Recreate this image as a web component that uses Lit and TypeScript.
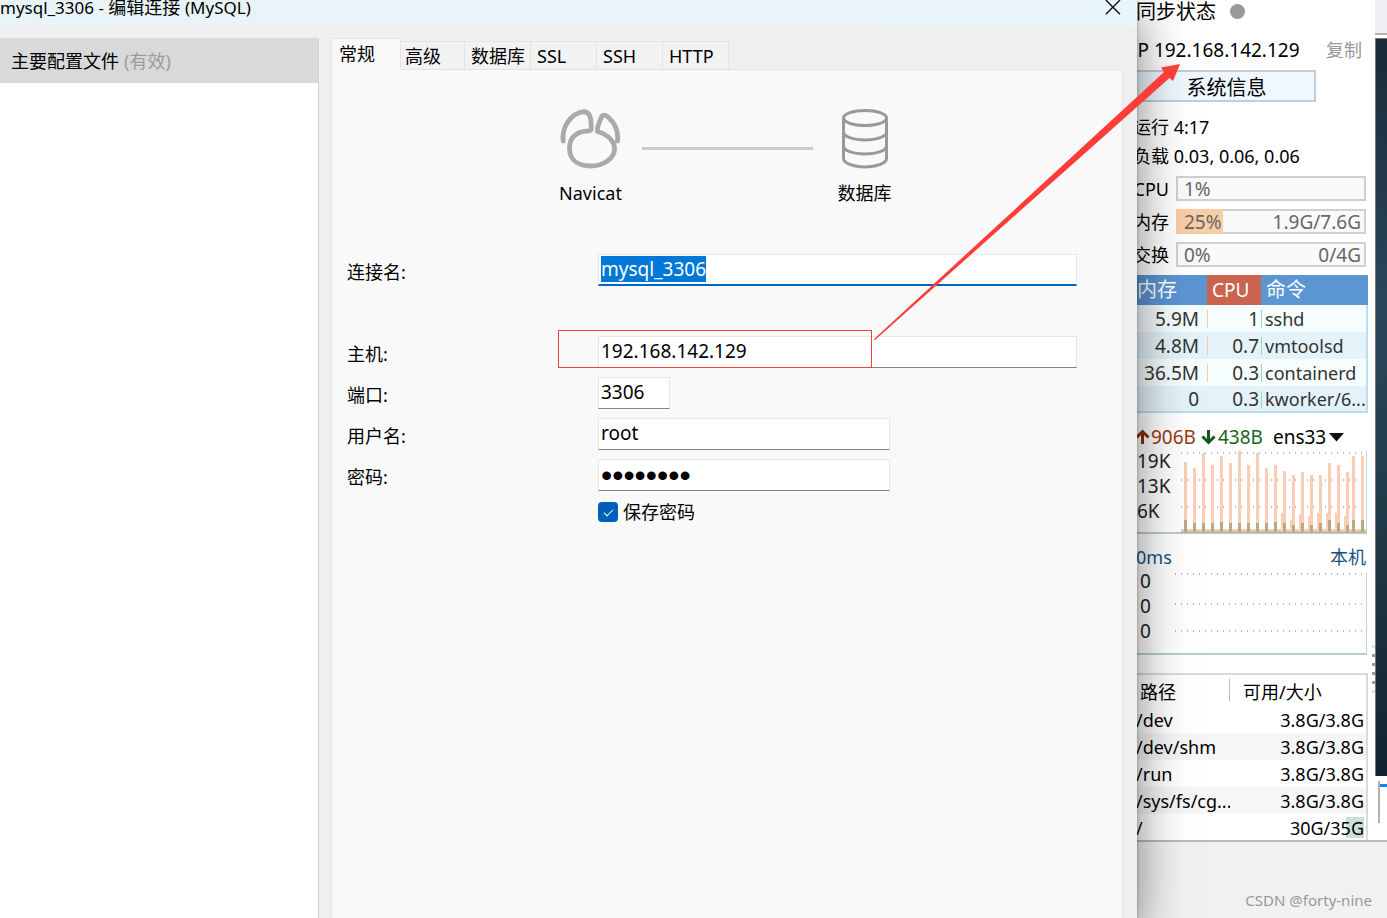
import { LitElement, html, css, svg } from "lit";
import { customElement } from "lit/decorators.js";

const base = css`
  *, *::before, *::after { box-sizing: border-box; }
  button, input, select {
    font: inherit; color: inherit; margin: 0; padding: 0; border: 0;
    border-radius: 0; background: none; appearance: none; outline: none;
  }
  svg { display: block; flex: none; }
`;

@customElement("connection-dialog")
class ConnectionDialog extends LitElement {
  static styles = [base, css`
    :host { display: flex; flex-direction: column; background: #efefef; font-size: 18px; }
    .title {
      display: flex; justify-content: space-between; align-items: flex-start;
      height: 26px; background: linear-gradient(90deg, #e9f4f7, #eaf3f8 60%, #e8f5fb);
      line-height: 14px; padding-right: 16px;
    }
    .title h1 { margin: 0; font-size: 18px; font-weight: 400; }
    .en { font-size: 17px; }
    .body { flex: 1; display: flex; padding: 12px 14px 0 0; }
    .side { width: 319px; background: #fff; border-right: 1px solid #d4d4d4; margin-right: 12px; }
    .profile { display: flex; width: 100%; height: 45px; align-items: center; gap: 5px;
      padding: 0 0 2px 11px; background: #d9d9d9; text-align: left; }
    .muted { color: #9c9c9c; }
    .main { flex: 1; display: flex; flex-direction: column; min-width: 0; }
    .tabs { display: flex; align-items: flex-end; height: 31px; }
    .tab {
      width: 66px; height: 28px; padding-left: 6px; text-align: left; white-space: nowrap;
      background: #f2f2f2; border: 1px solid #e3e3e3; border-width: 1px 1px 0 0; line-height: 26px;
    }
    .tab.on { width: 70px; height: 31px; padding-left: 7px; background: #f9f9f9; border-left-width: 1px;
      line-height: 29px; }
    .second { width: 64px; padding-left: 4px; }
    .pane {
      flex: 1; background: #f9f9f9; border-left: 1px solid #e3e3e3; border-right: 1px solid #e3e3e3;
      padding: 40px 45px 0 15px; position: relative;
    }
    .pane::before { content: ""; position: absolute; top: 0; left: 69px; right: 0; height: 1px; background: #e3e3e3; }
    .route { display: grid; grid-template-columns: 103px 171px 103px; justify-content: center;
      margin-right: -31px; }
    .end { display: flex; flex-direction: column; align-items: center; gap: 12px; line-height: 24px; margin: 0; }
    .wire { height: 3px; background: #ccc; margin-top: 38px; }
    form { margin-top: 49px; display: flex; flex-direction: column; gap: 9px; }
    .row { display: grid; grid-template-columns: 251px minmax(0, 1fr); position: relative; height: 32px; }
    .row.first { margin-bottom: 41px; }
    .row > label { line-height: 24px; padding-top: 6px; }
    .box {
      height: 32px; width: 100%; font-size: 19px; line-height: 24px; padding: 0 2px 3px;
      background: #fff; border: 1px solid #e6e6e6; border-bottom-color: #858585;
    }
    .box.focus { border-bottom: 2px solid #0067c0; padding-bottom: 2px; }
    .box.port { width: 72px; }
    .box.mid { width: 292px; }
    .box.secret { font-family: "Liberation Sans", sans-serif; font-size: 32px; padding: 0 2px 0 2px; }
    .box::selection { background: #0078d7; color: #fff; }
    .mark { position: absolute; left: 211px; top: -6px; width: 314px; height: 38px; border: 1px solid #f4403c; }
    .save { display: flex; align-items: center; gap: 5px; height: 24px; line-height: 22px; margin-left: 251px; }
    .save input { width: 20px; height: 20px; border-radius: 4px;
      background: #005fb8; display: grid; place-items: center; }
    .save input:checked::before { content: ""; width: 9px; height: 5px; border: solid #fff;
      border-width: 0 0 1px 1px; transform: translateY(-1px) rotate(-45deg); }
  `];

  firstUpdated() {
    const name = this.renderRoot.querySelector<HTMLInputElement>("#name");
    name?.focus();
    name?.select();
  }

  render() {
    return html`
      <header class="title">
        <h1><span class="en">mysql_3306 - </span>编辑连接 <span class="en">(MySQL)</span></h1>
        <button aria-label="关闭">
          <svg width="16" height="15" viewBox="0 0 16 15" stroke="#111" stroke-width="1.4">
            <path d="M.8 0 15 14.2M15 0 .8 14.2" />
          </svg>
        </button>
      </header>
      <div class="body">
        <nav class="side">
          <button class="profile">主要配置文件 <span class="muted">(有效)</span></button>
        </nav>
        <section class="main">
          <div class="tabs" role="tablist">
            <button class="tab on" role="tab" aria-selected="true">常规</button>
            <button class="tab second" role="tab">高级</button>
            ${["数据库", "SSL", "SSH", "HTTP"].map((t) => html`<button class="tab" role="tab">${t}</button>`)}
          </div>
          <div class="pane">
            <div class="route">
              <div class="end">
                <svg width="62" height="60" viewBox="0 0 62 60" fill="none" stroke="#aaa" stroke-width="4.8"
                  stroke-linecap="round" stroke-linejoin="round">
                  <path d="M3.2 32C1.5 17 12 4 23 2.8C29 2.3 31.5 7 31.200 20C31 22 29 22 27 22.1C16 22.5 9.5 29 9.5 39C9.5 51 18 57 30.500 57C44 57 54.500 49 54.500 40C54.500 33 49 26 37.5 22.500C36.700 20 38 16 41.500 8C42.500 5.500 45.500 5.500 48 8C55 14 58.500 23 57.500 32" />
                </svg>
                Navicat
              </div>
              <div class="wire"></div>
              <div class="end">
                <svg width="46" height="60" viewBox="0 0 46 60" fill="none" stroke="#999" stroke-width="3">
                  <ellipse cx="23" cy="9" rx="21.500" ry="7.500" />
                  <path d="M1.500 9V49.500C1.500 54 11 58 23 58S44.500 54 44.500 49.500V9M1.500 23C1.500 27.500 11 31 23 31S44.500 27.500 44.500 23M1.500 37C1.500 41.500 11 45 23 45S44.500 41.500 44.500 37" />
                </svg>
                数据库
              </div>
            </div>
            <form>
              <div class="row first"><label for="name">连接名:</label><input id="name" class="box focus" value="mysql_3306" /></div>
              <div class="row">
                <label for="host">主机:</label><input id="host" class="box" value="192.168.142.129" />
                <span class="mark"></span>
              </div>
              <div class="row"><label for="port">端口:</label><input id="port" class="box port" value="3306" /></div>
              <div class="row"><label for="user">用户名:</label><input id="user" class="box mid" value="root" /></div>
              <div class="row"><label for="pass">密码:</label><input id="pass" type="password" class="box mid secret" value="password" /></div>
              <label class="save"><input type="checkbox" checked />保存密码</label>
            </form>
          </div>
        </section>
      </div>
    `;
  }
}

/* Upload samples: bar centre, bar top and the top of the download part. */
const SAMPLES = [
  [4, 13, 71], [13, 19, 74], [22, 4, 74], [31, 16, 74], [40, 7, 73], [49, 14, 74], [58, 2, 74],
  [67, 16, 74], [76, 4, 74], [85, 19, 74], [94, 16, 73], [103, 22, 74], [112, 26, 76], [121, 23, 74],
  [130, 26, 76], [139, 26, 74], [148, 14, 71], [157, 16, 74], [166, 23, 76], [172, 7, 71], [181, 7, 71],
];
const MINOR = [[100, 64], [109, 71], [118, 65], [127, 67], [136, 64], [145, 64], [154, 64], [163, 67]];

const grid = (x: number, ys: number[], w: number) => ys.map((y) => svg`
  <path d="M${x} ${y}H${w}" stroke="#b8b8b8" stroke-width="2" stroke-dasharray="1 5" />`);

@customElement("server-monitor")
class ServerMonitor extends LitElement {
  static styles = [base, css`
    :host { display: flex; background: #fff; font-size: 18px; height: 842px; border-bottom: 2px solid #b9b9b9; overflow: hidden; }
    .panel { flex: 1; min-width: 0; display: flex; flex-direction: column; line-height: 24px; white-space: nowrap; }
    .sync { display: flex; align-items: center; gap: 14px; font-size: 20px; height: 23px; padding-left: 11px; }
    .dot { width: 15px; height: 15px; border-radius: 50%; background: #999; }
    .ip { display: flex; justify-content: space-between; margin-top: 15px; padding: 0 6px; height: 24px; }
    .ip span { font-size: 19px; }
    .copy { color: #999; }
    .info { width: 191px; height: 32px; margin-top: 8px; border: 2px solid #c5ccd2; background: #eff8ff;
      font-size: 20px; line-height: 28px; padding: 2px 0 0 12px; }
    .stat { margin: 13px 0 0 8px; }
    .stat + .stat { margin-top: 5px; }
    .meters { display: flex; flex-direction: column; gap: 8px; margin-top: 8px; padding-right: 2px; }
    .meter { display: grid; grid-template-columns: 51px 1fr; height: 25px; align-items: center; }
    .meter > span { text-align: right; padding-right: 7px; }
    .track { position: relative; display: flex; justify-content: space-between; height: 25px; padding: 0 3px 0 6px;
      border: 2px solid #d0d0d0; background: #fafafa; color: #666; line-height: 22px; font-size: 19px; }
    .fill { position: absolute; left: -2px; top: -2px; bottom: -2px; background: #fbcda6; }
    .track b { font-weight: 400; position: relative; }
    .pct { width: 25%; }
    table { border-collapse: separate; border-spacing: 0; table-layout: fixed; width: 100%; }
    th { font-weight: 400; text-align: left; }
    th, td { padding: 0; overflow: hidden; }
    .procs { margin-top: 8px; color: #333; }
    .procs th { height: 30px; background: #5b95d2; color: #fff; font-size: 20px; padding-left: 5px; }
    .procs th.mem { padding-left: 12px; width: 82px; }
    .procs th.cpu { background: #cb644f; width: 54px; font-size: 19px; }
    .procs td { height: 27px; background-color: #f5fdff; background-size: 1px 18px;
      background-repeat: no-repeat; background-position: 0 5px; }
    .procs tr:nth-child(even) td { background-color: #e4f3f9; }
    .procs td:nth-child(1) { text-align: right; padding-right: 8px; font-size: 19px; }
    .procs td:nth-child(2) { text-align: right; padding-right: 2px; font-size: 19px;
      background-image: linear-gradient(#fbc9a0, #fbc9a0); }
    .procs tr:last-child td:nth-child(2) { background-image: none; }
    .procs td:nth-child(3) { padding-left: 4px; border-right: 2px solid #bcdcf0;
      background-image: linear-gradient(#9fd8a8, #9fd8a8); }
    .procs tr:last-child td { border-bottom: 2px solid #bcdcf0; }
    .net { display: flex; align-items: center; height: 24px; margin-top: 12px; padding-left: 10px; font-size: 19px; }
    .up { color: #9a3a12; margin: 0 5px 0 1px; }
    .down { color: #1c6420; margin: 0 10px 0 2px; }
    .net select { width: 56px; height: 24px; }
    .chart { display: flex; justify-content: space-between; height: 85px; border-bottom: 2px solid #b5cdd6; margin-right: 1px; }
    .axis { display: flex; flex-direction: column; gap: 1px; padding-left: 12px; font-size: 19px; color: #222; }
    .lat .axis { padding-left: 15px; }
    .lat { height: 86px; }
    .ping { display: flex; justify-content: space-between; height: 24px; margin-top: 11px; padding: 0 2px 0 11px; color: #17527f; }
    .disks { margin-top: 18px; border: 2px solid #dadada; border-bottom: 0; width: 243px; }
    .disks th { height: 31px; padding: 2px 0 0 13px; }
    .disks th:first-child { width: 103px; background: linear-gradient(#bbb, #bbb) right 4px / 1px 22px no-repeat; }
    .disks td { height: 27px; }
    .disks td:first-child { padding-left: 9px; }
    .disks td:last-child { text-align: right; padding-right: 2px; }
    .disks tr:nth-child(even) td { background: #f6f6f6; }
    .disks tbody tr:last-child td:last-child { background: linear-gradient(#c8e0d8, #c8e0d8) right 2px center / 18px 21px no-repeat; }
    .gutter { width: 7px; display: flex; flex-direction: column; align-items: center; gap: 6px; padding: 645px 0 0 3px; }
    .gutter i { width: 3px; height: 3px; background: #999; }
    .gutter i:first-child, .gutter i:last-child { background: #e2e2e2; }
    .edge { width: 12px; display: flex; flex-direction: column; }
    .bar { height: 35px; background: #f0f0f4; border-bottom: 2px solid #b5b5b5; }
    .term { height: 738px; margin-top: 3px; border-left: 1px solid #777; border-top: 1px solid #777;
      background: linear-gradient(#192a38, #29465a 35%, #24404f 55%, #132230); }
    .foot { height: 42px; margin-top: 5px; border: solid #b0b0b0; border-width: 0 0 0 2px; margin-left: 3px; padding-top: 3px; }
    .foot i { display: block; height: 3px; background: #0a84ff; }
  `];

  render() {
    return html`
      <div class="panel">
        <div class="sync">同步状态 <i class="dot"></i></div>
        <div class="ip"><span>IP 192.168.142.129</span><button class="copy">复制</button></div>
        <button class="info">系统信息</button>
        <div class="stat">运行 4:17</div>
        <div class="stat">负载 0.03, 0.06, 0.06</div>
        <div class="meters">
          <div class="meter"><span>CPU</span><div class="track"><b>1%</b></div></div>
          <div class="meter"><span>内存</span><div class="track"><i class="fill pct"></i><b>25%</b><b>1.9G/7.6G</b></div></div>
          <div class="meter"><span>交换</span><div class="track"><b>0%</b><b>0/4G</b></div></div>
        </div>
        <table class="procs">
          <thead><tr><th class="mem">内存</th><th class="cpu">CPU</th><th>命令</th></tr></thead>
          <tbody>
            ${[["5.9M", "1", "sshd"], ["4.8M", "0.7", "vmtoolsd"], ["36.5M", "0.3", "containerd"], ["0", "0.3", "kworker/6..."]]
              .map((r) => html`<tr>${r.map((c) => html`<td>${c}</td>`)}</tr>`)}
          </tbody>
        </table>
        <div class="net">
          <svg width="15" height="16" viewBox="0 0 15 16" fill="none" stroke="#8a2f0c" stroke-width="3"><path d="M7.500 15V3M1.500 8.500 7.500 2.500 13.500 8.500" /></svg>
          <span class="up">906B</span>
          <svg width="15" height="16" viewBox="0 0 15 16" fill="none" stroke="#145a18" stroke-width="3"><path d="M7.500 1V13M1.500 7.500 7.500 13.500 13.500 7.500" /></svg>
          <span class="down">438B</span>
          <select aria-label="网卡"><option>ens33</option></select>
          <svg width="15" height="9" viewBox="0 0 15 9"><path d="M0 0H15L7.500 8.500Z" fill="#111" /></svg>
        </div>
        <div class="chart">
          <div class="axis"><span>19K</span><span>13K</span><span>6K</span></div>
          <svg width="186" height="84" viewBox="0 0 186 84">
            ${grid(0, [4, 31, 58], 186)}
            <path d="M0 81.500H185" stroke="#fcccb4" stroke-width="3" />
            ${MINOR.map(([x, y]) => svg`<rect x=${x} y=${y} width="3" height=${83 - y} fill="#fcccb4" />`)}
            ${SAMPLES.map(([x, y, d]) => svg`
              <rect x=${x - 1} y=${y} width="3" height=${83 - y} fill="#fcccb4" />
              <rect x=${x - 1} y=${d} width="3" height=${83 - d} fill="#b8aa80" />`)}
            <path d="M0 83H185" stroke="#b8aa80" />
            <path d="M185.500 2V84" stroke="#b9d8de" />
          </svg>
        </div>
        <div class="ping"><span>0ms</span><span>本机</span></div>
        <div class="chart lat">
          <div class="axis"><span>0</span><span>0</span><span>0</span></div>
          <svg width="192" height="84" viewBox="0 0 192 84">
            ${grid(0, [5, 35, 62], 192)}
            <path d="M191.500 4V84" stroke="#b9d8de" />
          </svg>
        </div>
        <table class="disks">
          <thead><tr><th>路径</th><th>可用/大小</th></tr></thead>
          <tbody>
            ${[["/dev", "3.8G/3.8G"], ["/dev/shm", "3.8G/3.8G"], ["/run", "3.8G/3.8G"], ["/sys/fs/cg...", "3.8G/3.8G"], ["/", "30G/35G"]]
              .map(([p, s]) => html`<tr><td>${p}</td><td>${s}</td></tr>`)}
          </tbody>
        </table>
      </div>
      <div class="gutter"><i></i><i></i><i></i><i></i><i></i><i></i></div>
      <div class="edge">
        <div class="bar"></div>
        <div class="term"></div>
        <div class="foot"><i></i></div>
      </div>
    `;
  }
}

@customElement("app-root")
class AppRoot extends LitElement {
  static styles = [base, css`
    :host {
      display: grid; grid-template-columns: minmax(0, 1fr) 250px; min-height: 100vh; position: relative;
      overflow: hidden; background: #f1f1f1; color: #000;
      font-family: "Noto Sans", "Noto Sans CJK SC", sans-serif;
    }
    connection-dialog { position: relative; z-index: 1; box-shadow: 0 16px 48px rgba(0, 0, 0, 0.5), 0 0 3px rgba(0, 0, 0, 0.3); }
    .back { display: flex; flex-direction: column; justify-content: space-between; margin-left: -12px; }
    .credit { margin: 0; padding: 0 15px 7px 0; text-align: right; font-size: 15px; line-height: 22px; color: #999; }
    .arrow { position: absolute; z-index: 2; right: 206px; top: 63px; pointer-events: none; }
  `];

  render() {
    return html`
      <connection-dialog></connection-dialog>
      <div class="back">
        <server-monitor></server-monitor>
        <p class="credit">CSDN @forty-nine</p>
      </div>
      <svg class="arrow" width="308" height="278" viewBox="0 0 308 278">
        <path d="M1 276 291 9 288 4.500 307 1 300 18 296.500 15 2 277Z" fill="#fc3d39" />
      </svg>
    `;
  }
}
